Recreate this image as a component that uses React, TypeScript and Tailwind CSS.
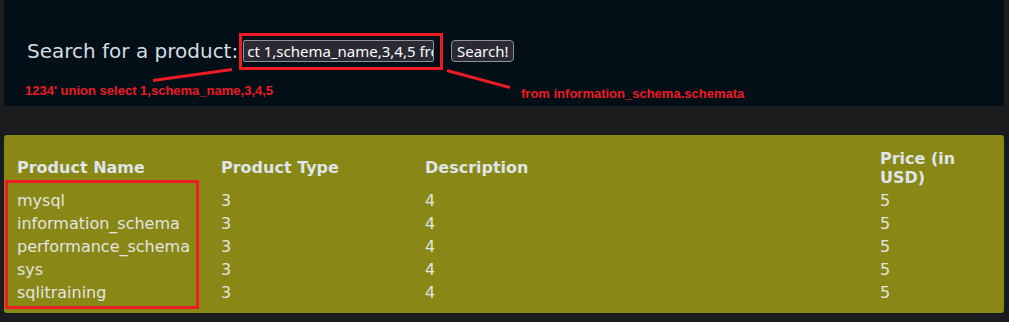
const rows = [
  { name: "mysql", type: "3", desc: "4", price: "5" },
  { name: "information_schema", type: "3", desc: "4", price: "5" },
  { name: "performance_schema", type: "3", desc: "4", price: "5" },
  { name: "sys", type: "3", desc: "4", price: "5" },
  { name: "sqlitraining", type: "3", desc: "4", price: "5" },
];

function SearchBar() {
  return (
    <div className="relative ml-[4px] w-[1000px] h-[106px] bg-[#020f16]">
      <div className="flex items-center pt-[40px] pl-[23px]">
        <span className="text-[20px] leading-[22px] text-[#d5dde3]">
          Search for a product:
        </span>
        <div className="ml-[5px] w-[191px] h-[22px] px-[3px] flex items-center overflow-hidden whitespace-nowrap rounded-[2px] border border-[#8f8f9d] bg-[#2b2a33] font-['Noto_Sans',sans-serif] text-[15px] text-[#fbfbfe]">
          ct 1,schema_name,3,4,5 from
        </div>
        <button className="ml-[17px] h-[22px] w-[63px] flex items-center justify-center rounded-[4px] border border-[#8f8f9d] bg-[#2b2a33] font-['Noto_Sans',sans-serif] text-[15px] text-[#fbfbfe]">
          Search!
        </button>
      </div>

      {/* annotations */}
      <div className="absolute left-[235px] top-[33px] w-[204px] h-[37px] border-[3px] border-[#ed1c24]"></div>
      <svg className="absolute inset-0 pointer-events-none" width="1000" height="106">
        <line x1="149" y1="80.5" x2="228" y2="69.5" stroke="#ed1c24" strokeWidth="3" />
        <line x1="443" y1="70.5" x2="506" y2="87.5" stroke="#ed1c24" strokeWidth="3" />
      </svg>
      <span className="absolute left-[21px] top-[83px] font-['Liberation_Sans',sans-serif] font-bold text-[13px] leading-[15px] text-[#ed1c24] whitespace-nowrap">
        1234' union select 1,schema_name,3,4,5
      </span>
      <span className="absolute left-[517px] top-[86px] font-['Liberation_Sans',sans-serif] font-bold text-[13px] leading-[15px] text-[#ed1c24] whitespace-nowrap">
        from information_schema.schemata
      </span>
    </div>
  );
}

function Products() {
  return (
    <div className="relative ml-[4px] mt-[29px] w-[1000px] h-[178px] rounded-[3px] bg-[#898716] pt-[10.5px] pl-[10px]">
      <table className="table-fixed w-[980px] border-separate border-spacing-[2px] text-[16px] leading-[normal] text-left">
        <thead>
          <tr className="text-[#dfe5e8]">
            <th className="w-[202px] p-[1px] font-bold">Product Name</th>
            <th className="w-[202px] p-[1px] font-bold">Product Type</th>
            <th className="w-[453px] p-[1px] font-bold">Description</th>
            <th className="w-[113px] p-[1px] font-bold">Price (in USD)</th>
          </tr>
        </thead>
        <tbody className="text-[#e2e5e2]">
          {rows.map((r) => (
            <tr key={r.name}>
              <td className="p-[1px]">{r.name}</td>
              <td className="p-[1px]">{r.type}</td>
              <td className="p-[1px]">{r.desc}</td>
              <td className="p-[1px]">{r.price}</td>
            </tr>
          ))}
        </tbody>
      </table>
      <div className="absolute left-[1px] top-[45px] w-[194px] h-[129px] border-[3px] border-[#ed1c24]"></div>
    </div>
  );
}

export default function App() {
  return (
    <div className="w-[1009px] h-[322px] overflow-hidden bg-[#1b1c1e] font-['DejaVu_Sans',sans-serif]">
      <SearchBar />
      <Products />
    </div>
  );
}
